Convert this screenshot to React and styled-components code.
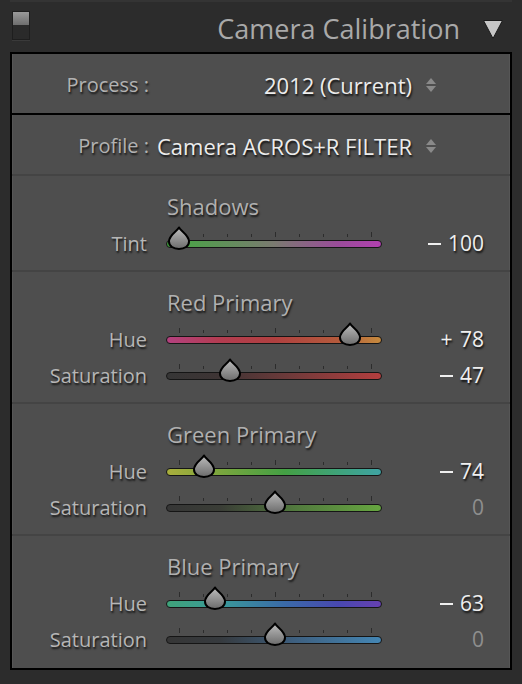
import React from 'react'
import styled, { createGlobalStyle } from 'styled-components'

const GlobalStyle = createGlobalStyle`
  html, body {
    margin: 0;
    padding: 0;
    background: #2c2c2c;
  }
  body {
    font-family: "Open Sans", "Noto Sans", "Liberation Sans", sans-serif;
    -webkit-font-smoothing: antialiased;
  }
`

const Page = styled.div`
  width: 522px;
  height: 684px;
  background: #2c2c2c;
  display: flex;
  flex-direction: column;
`

const TopEdge = styled.div`
  height: 2px;
  margin: 0 10px;
  background: #343434;
`

const Header = styled.div`
  height: 50px;
  display: flex;
  align-items: center;
  padding: 0 18px 0 12px;
`

const Switch = styled.div`
  width: 18px;
  height: 29px;
  margin-top: -4px;
  box-sizing: border-box;
  border: 1px solid #1e1e1e;
  background: linear-gradient(#9a9a9a, #6c6c6c 50%, #2a2a2a 50%, #2a2a2a);
  box-shadow: 0 1px 0 #3a3a3a;
`

const Title = styled.div`
  margin-left: auto;
  font-size: 27px;
  color: #a9a9a9;
  margin-top: 2px;
`

const Collapse = styled.svg`
  width: 22px;
  height: 22px;
  margin-left: 22px;
  margin-top: 4px;
`

const Panel = styled.div`
  margin: 0 10px;
  height: 618px;
  box-sizing: border-box;
  border: 2px solid #000;
  background: #4e4e4e;
  box-shadow: inset 1px 0 0 #565656, inset -1px 0 0 #565656;
  display: flex;
  flex-direction: column;
`

const PopupRow = styled.div`
  height: 59px;
  display: grid;
  grid-template-columns: 137px 1fr;
  align-items: center;
  border-bottom: ${p => (p.$strong ? '2px solid #000' : 'none')};
`

const PopupLabel = styled.div`
  text-align: right;
  font-size: 20px;
  color: #b2b2b2;
  text-shadow: 1px 2px 2px rgba(0, 0, 0, 0.75);
  margin-top: 2px;
`

const PopupValue = styled.div`
  display: flex;
  align-items: center;
  justify-content: flex-end;
  padding-right: 73px;
  font-size: 22px;
  color: #ececec;
  text-shadow: 1px 2px 2px rgba(0, 0, 0, 0.8);
  margin-top: 2px;
`

const Stepper = styled.svg`
  width: 12px;
  height: 18px;
  margin-left: 13px;
`

const Section = styled.div`
  border-top: 2px solid #444;
  padding: 18px 0 9px;
  flex: ${p => (p.$fill ? 1 : 'none')};
`

const SectionTitle = styled.div`
  height: 24px;
  line-height: 24px;
  padding-left: 155px;
  margin-bottom: 7px;
  font-size: 22px;
  color: #b0b0b0;
  text-shadow: 1px 2px 2px rgba(0, 0, 0, 0.75);
`

const Row = styled.div`
  height: 36px;
  display: grid;
  grid-template-columns: 135px 216px 1fr;
  column-gap: 19px;
  align-items: center;
  padding-right: 26px;
`

const Label = styled.div`
  text-align: right;
  font-size: 20px;
  color: #b6b6b6;
  text-shadow: 1px 2px 2px rgba(0, 0, 0, 0.75);
`

const Value = styled.div`
  text-align: right;
  font-size: 21px;
  word-spacing: 2px;
  color: ${p => (p.$dim ? '#8e8e8e' : '#efefef')};
  text-shadow: ${p => (p.$dim ? 'none' : '1px 2px 2px rgba(0, 0, 0, 0.8)')};
`

const Dash = styled.span`
  display: inline-block;
  width: 13px;
  height: 2px;
  margin-bottom: 6px;
  background: currentColor;
`

const Track = styled.div`
  position: relative;
  height: 8px;
  margin-top: 2px;
  box-sizing: border-box;
  border: 1px solid #151515;
  border-radius: 4px;
  background: ${p => p.$gradient};
`

const Tick = styled.span`
  position: absolute;
  bottom: 10px;
  width: 1px;
  height: ${p => (p.$tall ? 5 : 3)}px;
  background: #2c2c2c;
`

const Thumb = styled.svg`
  position: absolute;
  top: -16px;
  width: 26px;
  height: 26px;
  margin-left: -13px;
`

const TICKS = [0, 1, 2, 3, 4, 5, 6, 7, 8]

function Slider({ value, gradient }) {
  const x = 12 + ((value + 100) / 200) * 192
  return (
    <Track $gradient={gradient}>
      {TICKS.map(i => (
        <Tick key={i} $tall={i % 4 === 0} style={{ left: 12 + i * 24 }} />
      ))}
      <Thumb viewBox="0 0 26 26" style={{ left: x }}>
        <defs>
          <linearGradient id="thumbFill" x1="0" y1="0" x2="0" y2="1">
            <stop offset="0" stopColor="#bdbdbd" />
            <stop offset="1" stopColor="#6b6b6b" />
          </linearGradient>
        </defs>
        <path
          d="M13 2.5 C14.8 6 23 10 23 16.5 C23 21.3 18.5 24 13 24 C7.5 24 3 21.3 3 16.5 C3 10 11.2 6 13 2.5Z"
          fill="url(#thumbFill)"
          stroke="#000"
          strokeWidth="2"
          strokeLinejoin="round"
        />
      </Thumb>
    </Track>
  )
}

const UpDown = () => (
  <Stepper viewBox="0 0 12 18">
    <polygon points="6,2 11,8 1,8" fill="#8a8a8a" />
    <polygon points="1,10 11,10 6,16" fill="#8a8a8a" />
  </Stepper>
)

const sections = [
  {
    title: 'Shadows',
    rows: [
      { label: 'Tint', value: -100, sign: '-', num: '100', gradient: 'linear-gradient(90deg, #3f9a3c, #4ea04a 10%, #7a7a70 50%, #9a4c9a 80%, #b140b0)' },
    ],
  },
  {
    title: 'Red Primary',
    rows: [
      { label: 'Hue', value: 78, sign: '+', num: '78', gradient: 'linear-gradient(90deg, #b3417f, #b33c50 25%, #b04040 50%, #b45a3c 80%, #c58a3e)' },
      { label: 'Saturation', value: -47, sign: '-', num: '47', gradient: 'linear-gradient(90deg, #363636, #3e3434 25%, #6b3a3a 55%, #b43e3e)' },
    ],
  },
  {
    title: 'Green Primary',
    rows: [
      { label: 'Hue', value: -74, sign: '-', num: '74', gradient: 'linear-gradient(90deg, #a9ae3c, #7aa63e 25%, #44a044 55%, #3fa37a 80%, #3fa3a3)' },
      { label: 'Saturation', value: 0, num: '0', dim: true, gradient: 'linear-gradient(90deg, #363636, #3a3d36 25%, #527a3e 60%, #66a640)' },
    ],
  },
  {
    title: 'Blue Primary',
    rows: [
      { label: 'Hue', value: -63, sign: '-', num: '63', gradient: 'linear-gradient(90deg, #3fa37a, #3a9a9a 25%, #3a6aa8 55%, #4848b0 80%, #6640b0)' },
      { label: 'Saturation', value: 0, num: '0', dim: true, gradient: 'linear-gradient(90deg, #363636, #363a3e 25%, #3e6080 60%, #4486b4)' },
    ],
  },
]

export default function App() {
  return (
    <Page>
      <GlobalStyle />
      <TopEdge />
      <Header>
        <Switch />
        <Title>Camera Calibration</Title>
        <Collapse viewBox="0 0 22 22">
          <polygon points="1.5,2.5 20.5,2.5 11,20.5" fill="#c6c6c6" stroke="#1a1a1a" strokeWidth="1" strokeLinejoin="round" />
        </Collapse>
      </Header>
      <Panel>
        <PopupRow $strong>
          <PopupLabel>Process :</PopupLabel>
          <PopupValue>
            2012 (Current)
            <UpDown />
          </PopupValue>
        </PopupRow>
        <PopupRow>
          <PopupLabel>Profile :</PopupLabel>
          <PopupValue>
            Camera ACROS+R FILTER
            <UpDown />
          </PopupValue>
        </PopupRow>
        {sections.map((s, i) => (
          <Section key={s.title} $fill={i === sections.length - 1}>
            <SectionTitle>{s.title}</SectionTitle>
            {s.rows.map(r => (
              <Row key={r.label}>
                <Label>{r.label}</Label>
                <Slider value={r.value} gradient={r.gradient} />
                <Value $dim={r.dim}>
                  {r.sign === '-' ? <Dash /> : r.sign}
                  {r.sign ? ' ' : ''}
                  {r.num}
                </Value>
              </Row>
            ))}
          </Section>
        ))}
      </Panel>
    </Page>
  )
}
